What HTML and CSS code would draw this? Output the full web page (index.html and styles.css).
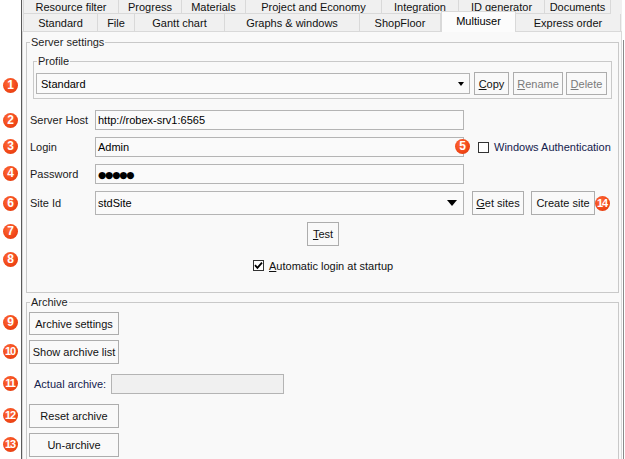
FILE: index.html
```html
<!DOCTYPE html>
<html>
<head>
<meta charset="utf-8">
<link rel="stylesheet" href="styles.css">
</head>
<body>
<div class="app">
  <div class="gutter"></div>
  <div class="main">
    <div class="tabs">
      <div class="tabrow row1">
        <div class="tab">Resource filter</div>
        <div class="tab">Progress</div>
        <div class="tab">Materials</div>
        <div class="tab">Project and Economy</div>
        <div class="tab">Integration</div>
        <div class="tab">ID generator</div>
        <div class="tab">Documents</div>
      </div>
      <div class="tabrow row2">
        <div class="tab">Standard</div>
        <div class="tab">File</div>
        <div class="tab">Gantt chart</div>
        <div class="tab">Graphs &amp; windows</div>
        <div class="tab">ShopFloor</div>
        <div class="tab active">Multiuser</div>
        <div class="tab">Express order</div>
      </div>
    </div>
    <div class="panel">
      <fieldset class="group server">
        <legend>Server settings</legend>
        <fieldset class="group profile">
          <legend>Profile</legend>
          <div class="profile-row">
            <div class="combo combo-profile"><span>Standard</span><span class="arrow arrow-sm"></span></div>
            <button class="btn btn-copy"><u>C</u>opy</button>
            <button class="btn btn-rename disabled"><u>R</u>ename</button>
            <button class="btn btn-delete disabled"><u>D</u>elete</button>
          </div>
        </fieldset>
        <div class="form-row first">
          <span class="label">Server Host</span>
          <div class="input">http://robex-srv1:6565</div>
        </div>
        <div class="form-row">
          <span class="label">Login</span>
          <div class="input">Admin</div>
          <span class="check"></span>
          <span class="navy">Windows Authentication</span>
        </div>
        <div class="form-row">
          <span class="label">Password</span>
          <div class="input"><span class="dots">●●●●●</span></div>
        </div>
        <div class="form-row site-row">
          <span class="label">Site Id</span>
          <div class="combo combo-site"><span>stdSite</span><span class="arrow arrow-lg"></span></div>
          <button class="btn btn-get"><u>G</u>et sites</button>
          <button class="btn btn-create">Create site</button>
        </div>
        <div class="test-row">
          <button class="btn btn-test"><u>T</u>est</button>
        </div>
        <div class="auto-row">
          <span class="check checked"><svg width="9" height="9" viewBox="0 0 9 9"><path d="M1 4.2 L3.4 6.8 L8 1.6" fill="none" stroke="#000" stroke-width="1.8"/></svg></span>
          <span><u>A</u>utomatic login at startup</span>
        </div>
      </fieldset>
      <fieldset class="group archive">
        <legend class="navy">Archive</legend>
        <button class="btn btn-arch first-btn">Archive settings</button>
        <button class="btn btn-arch gap5">Show archive list</button>
        <div class="actual-row">
          <span class="navy actual-label">Actual archive:</span>
          <div class="input input-disabled"></div>
        </div>
        <button class="btn btn-arch gap10">Reset archive</button>
        <button class="btn btn-arch gap5">Un-archive</button>
      </fieldset>
    </div>
  </div>
  <div class="edge"></div>
</div>
<div class="badge b1">1</div>
<div class="badge b2">2</div>
<div class="badge b3">3</div>
<div class="badge b4">4</div>
<div class="badge b5">5</div>
<div class="badge b6">6</div>
<div class="badge b7">7</div>
<div class="badge b8">8</div>
<div class="badge b9">9</div>
<div class="badge b10 two">10</div>
<div class="badge b11 two">11</div>
<div class="badge b12 two">12</div>
<div class="badge b13 two">13</div>
<div class="badge b14 two">14</div>
</body>
</html>
```
FILE: styles.css
```css
* { box-sizing: border-box; }
html, body { margin: 0; padding: 0; }
body {
  width: 625px;
  height: 459px;
  overflow: hidden;
  background: #ffffff;
  font-family: "Liberation Sans", Arial, sans-serif;
  font-size: 11px;
  color: #1a1a1a;
  position: relative;
}
.app { display: flex; height: 459px; }
.gutter { background: #fff; border-right: 1px solid #5a5a5a; flex: none; width: 22px; }
.main { width: 600px; flex: none; display: flex; flex-direction: column; background: #f0f0f0; }
.edge { flex: 1; background: #fff; }
.edge::after { content: ""; display: block; width: 1px; height: 419px; margin-top: 40px; margin-left: 1px; background: #8a8a8a; }

/* tabs */
.tabs { height: 31px; flex: none; }
.tabrow { display: flex; padding-left: 1px; }
.row1 { height: 14px; }
.row2 { height: 17px; }
.tab {
  border-right: 1px solid #d9d9d9;
  border-bottom: 1px solid #d9d9d9;
  background: #f0f0f0;
  text-align: center;
  white-space: nowrap;
  color: #111;
}
.tab:first-child { border-left: 1px solid #d9d9d9; }
.row1 .tab { height: 14px; line-height: 15px; }
.row2 .tab { height: 17px; line-height: 19px; border-bottom: none; }
.row1 .tab:nth-child(1) { width: 96px; }
.row1 .tab:nth-child(2) { width: 63px; }
.row1 .tab:nth-child(3) { width: 64px; }
.row1 .tab:nth-child(4) { width: 136px; }
.row1 .tab:nth-child(5) { width: 77px; }
.row1 .tab:nth-child(6) { width: 86px; }
.row1 .tab:nth-child(7) { width: 66px; }
.row2 .tab:nth-child(1) { width: 75px; }
.row2 .tab:nth-child(2) { width: 37px; }
.row2 .tab:nth-child(3) { width: 90px; }
.row2 .tab:nth-child(4) { width: 135px; }
.row2 .tab:nth-child(5) { width: 81px; }
.row2 .tab:nth-child(6) { width: 75px; }
.row2 .tab:nth-child(7) { width: 105px; }
.row2 .tab.active {
  margin-top: -3px;
  height: 21px;
  line-height: 18px;
  background: #fcfcfc;
  border-top: 1px solid #d9d9d9;
  border-left: 1px solid #d9d9d9;
  position: relative;
  z-index: 2;
  color: #000;
}

/* panel */
.panel {
  flex: 1;
  background: #f9f9f9;
  border: 1px solid #d9d9d9;
  border-bottom: none;
  padding: 4px 0 0 3px;
}
fieldset.group {
  margin: 0;
  border: 1px solid #c9c9c9;
  min-width: 0;
  padding: 0;
}
fieldset.group > legend {
  padding: 0 1px;
  margin-left: 3px;
  line-height: 13px;
  font-size: 11px;
  color: #1e1e1e;
}
fieldset.server { width: 593px; height: 257px; }
fieldset.profile { width: 579px; margin: 6px 0 0 6px; height: 44px; }
.profile-row { display: flex; align-items: flex-start; margin-top: 4px; padding-left: 2px; }

.combo {
  border: 1px solid #b4b4b4;
  background: #fafafa;
  display: flex;
  align-items: center;
  justify-content: space-between;
  color: #000;
  font-size: 11px;
}
.combo-profile { width: 434px; height: 21px; margin-top: 1px; padding: 0 5px 0 4px; }
.combo-site { width: 369px; height: 24px; padding: 0 6px 0 2px; }
.arrow { width: 0; height: 0; border-style: solid; border-color: #000 transparent transparent transparent; }
.arrow-sm { border-width: 4px 3.5px 0 3.5px; }
.arrow-lg { border-width: 6px 5.5px 0 5.5px; }

.btn {
  font-family: inherit;
  font-size: 11px;
  color: #111;
  background: #f9f9f9;
  border: 1px solid #adadad;
  border-radius: 0;
  padding: 0;
  height: 23px;
  display: block;
  margin: 0;
  white-space: nowrap;
}
.btn.disabled { color: #7a7a7a; }
.btn-copy { width: 35px; margin-left: 4px; }
.btn-rename { width: 50px; margin-left: 4px; }
.btn-delete { width: 41px; margin-left: 3px; }

.form-row { display: flex; align-items: center; height: 20px; margin-top: 7px; padding-left: 3px; }
.form-row.first { margin-top: 11px; }
.label { width: 65px; flex: none; font-size: 11px; color: #1a1a1a; }
.input {
  width: 369px;
  height: 20px;
  border: 1px solid #b4b4b4;
  background: #fafafa;
  padding: 0 2px;
  line-height: 18px;
  font-size: 11px;
  color: #000;
  flex: none;
}
.dots { font-family: "DejaVu Sans", sans-serif; font-size: 9.5px; letter-spacing: -1.2px; }
.check {
  width: 11px; height: 11px;
  border: 1px solid #333;
  background: #fff;
  display: inline-flex;
  align-items: center;
  justify-content: center;
  margin-left: 14px;
  margin-right: 5px;
  flex: none;
}
.navy { color: #14214d; font-size: 11px; }
.site-row { height: 24px; }
.btn-get { width: 52px; height: 24px; margin-left: 8px; }
.btn-create { width: 64px; height: 24px; margin-left: 7px; }

.test-row { display: flex; margin-top: 7px; padding-left: 280px; }
.btn-test { width: 32px; height: 24px; }
.auto-row { display: flex; align-items: center; margin-top: 13px; padding-left: 226px; height: 13px; font-size: 11px; color: #111; }
.auto-row .check { margin-left: 0; margin-right: 5px; }

fieldset.archive { width: 593px; height: 170px; margin-top: 3px; }
.btn-arch { width: 90px; margin-left: 2px; }
.first-btn { margin-top: 3px; height: 23px; }
.gap5 { margin-top: 5px; height: 24px; }
.gap10 { margin-top: 10px; height: 24px; }
.actual-row { display: flex; align-items: center; margin-top: 10px; height: 20px; padding-left: 7px; }
.actual-label { width: 77px; flex: none; white-space: nowrap; }
.input-disabled { width: 173px; background: #f0f0f0; }

/* callout badges */
.badge {
  position: absolute;
  width: 15px; height: 15px;
  border-radius: 50%;
  background: radial-gradient(circle at 40% 35%, #ff6a3a 0%, #f04616 60%, #d83a10 100%);
  color: #fff;
  font-family: "Liberation Sans", Arial, sans-serif;
  font-weight: bold;
  font-size: 12px;
  line-height: 15px;
  text-align: center;
  z-index: 5;
}
.badge.two { letter-spacing: -1px; text-indent: -1px; font-size: 11px; }
.b1 { left: 3px; top: 78px; }
.b2 { left: 3px; top: 113px; }
.b3 { left: 3px; top: 139px; }
.b4 { left: 3px; top: 166px; }
.b5 { left: 455px; top: 139px; }
.b6 { left: 3px; top: 196px; }
.b7 { left: 3px; top: 224px; }
.b8 { left: 3px; top: 252px; }
.b9 { left: 3px; top: 315px; }
.b10 { left: 3px; top: 344px; }
.b11 { left: 3px; top: 376px; }
.b12 { left: 3px; top: 408px; }
.b13 { left: 3px; top: 437px; }
.b14 { left: 595px; top: 196px; }
```
